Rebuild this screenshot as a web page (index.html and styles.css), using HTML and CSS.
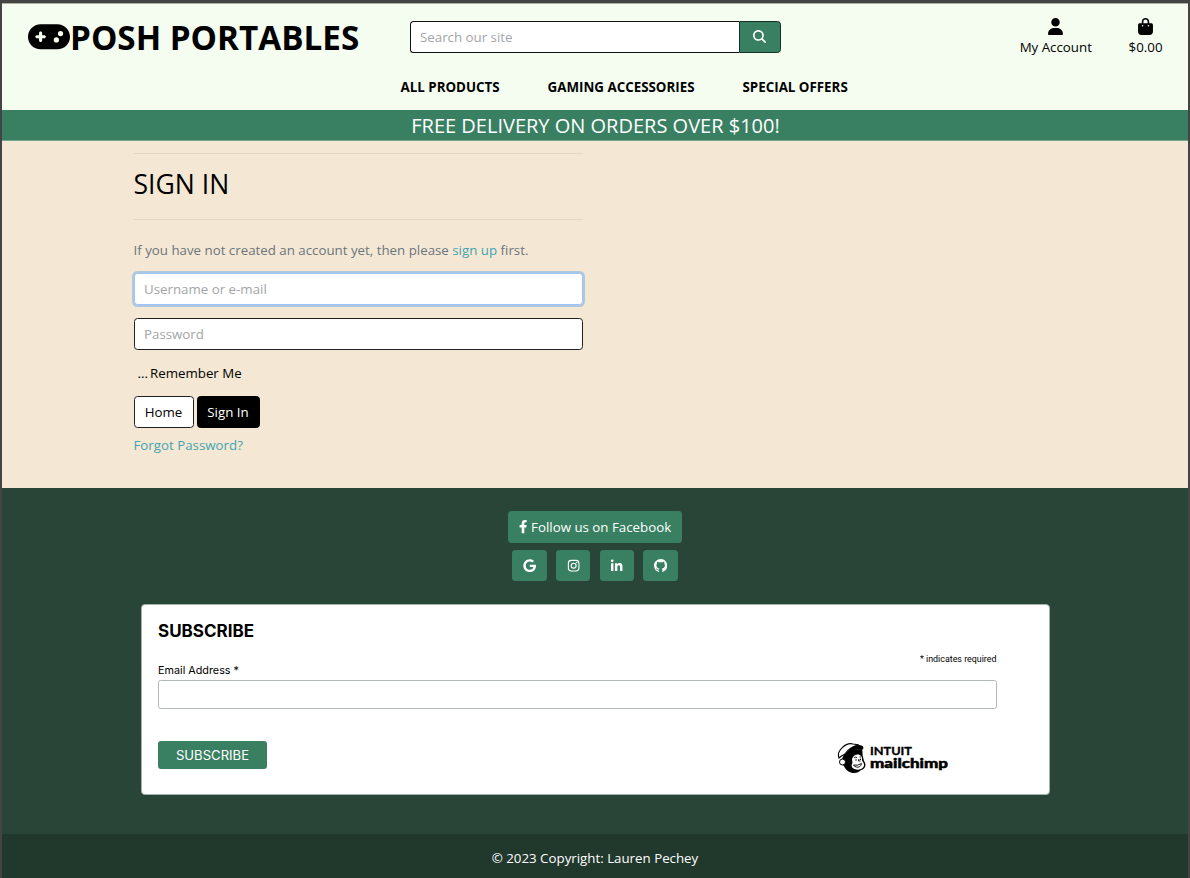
FILE: index.html
```html
<!DOCTYPE html>
<html lang="en">
<head>
<meta charset="utf-8">
<title>Posh Portables - Sign In</title>
<link rel="stylesheet" href="styles.css">
</head>
<body>
<div class="page">
  <header class="header">
    <div class="topbar">
      <a class="brand" href="#">
        <svg class="brand-icon" viewBox="0 64 640 384"><path d="M192 64C86 64 0 150 0 256S86 448 192 448H448c106 0 192-86 192-192s-86-192-192-192H192zM496 168a40 40 0 1 1 0 80 40 40 0 1 1 0-80zM392 304a40 40 0 1 1 80 0 40 40 0 1 1 -80 0zM168 200c0-13.300 10.700-24 24-24s24 10.700 24 24v32h32c13.300 0 24 10.700 24 24s-10.700 24-24 24H216v32c0 13.300-10.700 24-24 24s-24-10.700-24-24V280H136c-13.300 0-24-10.700-24-24s10.700-24 24-24h32V200z"/></svg>
        <span class="brand-name">POSH PORTABLES</span>
      </a>
      <form class="search">
        <input class="search-input" type="text" placeholder="Search our site">
        <button class="search-button" type="button" aria-label="Search">
          <svg class="search-icon" viewBox="0 0 512 512"><path d="M416 208c0 45.900-14.900 88.300-40 122.700L502.600 457.400c12.500 12.500 12.500 32.800 0 45.300s-32.800 12.500-45.300 0L330.700 376c-34.400 25.200-76.800 40-122.700 40C93.100 416 0 322.900 0 208S93.100 0 208 0S416 93.100 416 208zM208 352a144 144 0 1 0 0-288 144 144 0 1 0 0 288z"/></svg>
        </button>
      </form>
      <div class="account-links">
        <a class="account-link" href="#">
          <svg class="account-icon" viewBox="0 0 448 512"><path d="M224 256A128 128 0 1 0 224 0a128 128 0 1 0 0 256zm-45.700 48C79.800 304 0 383.800 0 482.300C0 498.700 13.300 512 29.700 512H418.300c16.400 0 29.700-13.300 29.700-29.700C448 383.800 368.200 304 269.700 304H178.300z"/></svg>
          <span>My Account</span>
        </a>
        <a class="account-link" href="#">
          <svg class="account-icon" viewBox="0 0 448 512"><path d="M160 112c0-35.300 28.700-64 64-64s64 28.700 64 64v48H160V112zm-48 48H48c-26.500 0-48 21.500-48 48V416c0 53 43 96 96 96H352c53 0 96-43 96-96V208c0-26.500-21.500-48-48-48H336V112C336 50.100 285.900 0 224 0S112 50.100 112 112v48zm24 48a24 24 0 1 1 0 48 24 24 0 1 1 0-48zm152 24a24 24 0 1 1 48 0 24 24 0 1 1 -48 0z"/></svg>
          <span>$0.00</span>
        </a>
      </div>
    </div>
    <nav class="nav">
      <a href="#">ALL PRODUCTS</a>
      <a href="#">GAMING ACCESSORIES</a>
      <a href="#">SPECIAL OFFERS</a>
    </nav>
  </header>
  <div class="banner">FREE DELIVERY ON ORDERS OVER $100!</div>

  <main class="main">
    <section class="signin">
      <h1 class="signin-title">SIGN IN</h1>
      <p class="signin-note">If you have not created an account yet, then please <a class="link" href="#">sign up</a> first.</p>
      <input class="field field-active" type="text" placeholder="Username or e-mail">
      <input class="field" type="password" placeholder="Password">
      <div class="remember"><span>...</span><span>Remember Me</span></div>
      <div class="actions">
        <a class="button button-light" href="#">Home</a>
        <a class="button button-dark" href="#">Sign In</a>
      </div>
      <a class="link" href="#">Forgot Password?</a>
    </section>
  </main>

  <footer class="footer">
    <a class="facebook" href="#">
      <svg class="facebook-icon" viewBox="0 0 320 512"><path d="M279.140 288l14.220-92.660h-88.910v-60.130c0-25.350 12.420-50.060 52.240-50.060h40.420V6.260S260.430 0 225.360 0c-73.220 0-121.080 44.380-121.080 124.720v70.620H22.890V288h81.390v224h100.170V288z"/></svg>
      <span>Follow us on Facebook</span>
    </a>
    <div class="social">
      <a class="social-link" href="#" aria-label="Google">
        <svg class="social-icon" viewBox="0 0 488 512"><path d="M488 261.800C488 403.300 391.100 504 248 504 110.800 504 0 393.200 0 256S110.800 8 248 8c66.800 0 123 24.500 166.300 64.900l-67.500 64.900C258.500 52.600 94.300 116.600 94.300 256c0 86.500 69.100 156.600 153.700 156.600 98.200 0 135-70.400 140.800-106.900H248v-85.300h236.100c2.300 12.700 3.900 24.900 3.900 41.400z"/></svg>
      </a>
      <a class="social-link social-narrow" href="#" aria-label="Instagram">
        <svg class="social-icon" viewBox="0 0 512 512"><g fill="none" stroke="#fff" stroke-width="42"><rect x="53" y="53" width="406" height="406" rx="112"/><circle cx="256" cy="256" r="94"/></g><circle cx="375" cy="137" r="27"/></svg>
      </a>
      <a class="social-link social-narrow" href="#" aria-label="LinkedIn">
        <svg class="social-icon" viewBox="0 -16 448 512"><path d="M100.280 448H7.400V148.900h92.880zM53.790 108.100C24.090 108.100 0 83.500 0 53.800a53.790 53.790 0 0 1 107.580 0c0 29.700-24.100 54.300-53.790 54.300zM447.900 448h-92.680V302.400c0-34.700-.7-79.200-48.290-79.200-48.290 0-55.690 37.700-55.690 76.700V448h-92.780V148.900h89.080v40.800h1.300c12.400-23.500 42.690-48.300 87.880-48.300 94 0 111.280 61.900 111.280 142.300V448z"/></svg>
      </a>
      <a class="social-link" href="#" aria-label="GitHub">
        <svg class="social-icon" viewBox="0 0 16 16"><path d="M8 0C3.580 0 0 3.580 0 8c0 3.540 2.290 6.530 5.470 7.590.4.070.55-.17.55-.38 0-.19-.01-.82-.01-1.490-2.010.37-2.530-.49-2.690-.94-.09-.23-.48-.94-.82-1.130-.28-.15-.68-.52-.01-.53.63-.01 1.080.58 1.230.82.72 1.210 1.870.87 2.330.66.07-.52.28-.87.51-1.070-1.780-.2-3.640-.89-3.640-3.950 0-.87.31-1.590.82-2.150-.08-.2-.36-1.020.08-2.120 0 0 .67-.21 2.200.82.64-.18 1.320-.27 2-.27.68 0 1.360.09 2 .27 1.530-1.040 2.200-.82 2.200-.82.44 1.100.16 1.920.08 2.120.51.56.82 1.270.82 2.150 0 3.070-1.870 3.750-3.650 3.950.29.25.54.73.54 1.480 0 1.070-.01 1.930-.01 2.200 0 .21.15.46.55.38A8.010 8.010 0 0 0 16 8c0-4.420-3.580-8-8-8z"/></svg>
      </a>
    </div>

    <form class="subscribe">
      <h2 class="subscribe-title">SUBSCRIBE</h2>
      <div class="required-note">* indicates required</div>
      <label class="email-label" for="email">Email Address *</label>
      <input class="email-input" id="email" type="email">
      <div class="subscribe-row">
        <button class="subscribe-button" type="button">SUBSCRIBE</button>
        <svg class="mailchimp" viewBox="0 0 112 34">
          <path d="M5 17C7 11 12 7 17 8l8-1c1 3 0 5 1 8l1 4c3 4 1 8-3 9-4 5-14 4-17-4-3-2-4-4-2-7z" fill="#000"/>
          <path d="M2 16C-1 9 9 0 16 2c3 0 4 1 6 1-6 1-11 4-14 9-2 1-4 2-6 4z" fill="#fff" stroke="#000" stroke-width="1.100"/>
          <path d="M10 11C12 6 17 3 22 3c4 0 6 3 3 5-6-1-11 0-15 3z" fill="#000"/>
          <circle cx="5.500" cy="20" r="3" fill="#fff" stroke="#000" stroke-width="1"/>
          <path d="M15 17c1-4 6-6 9-3 2 2 0 4 2 6 2 3 1 6-2 7-5 2-11-1-9-5 1-2 0-3 0-5z" fill="#fff"/>
          <path d="M17 16q1.500-1.500 3-.5M22.500 15h1.500M16.500 23q4 1 8-1.500-1 4.500-5 3.500-2 0-3-2M22 17l-.5 2h2" fill="none" stroke="#000" stroke-width=".9"/>
          <path d="M18.500 18h1M23 17.300h1" stroke="#000" stroke-width="1.300"/>
          <text class="intuit" x="33" y="12.500" textLength="42" lengthAdjust="spacingAndGlyphs">INTUIT</text>
          <text class="chimp" x="33" y="26" textLength="78" lengthAdjust="spacingAndGlyphs">mailchimp</text>
        </svg>
      </div>
    </form>
    <div class="copyright">© 2023 Copyright: Lauren Pechey</div>
  </footer>
</div>
</body>
</html>
```
FILE: styles.css
```css
* { box-sizing: border-box; }
body {
  margin: 0;
  font-family: "Open Sans", "Noto Sans", sans-serif;
  font-size: 13.3px;
  line-height: 20px;
  color: #000;
}
a { color: inherit; text-decoration: none; }
svg { display: block; }
input, button { font-family: inherit; font-size: inherit; margin: 0; }
input::placeholder { color: #a3a5a8; opacity: 1; }

.page {
  height: 878px;
  border: solid #444;
  border-width: 3px 2px 0;
  display: flex;
  flex-direction: column;
  overflow: hidden;
}

.header { height: 107px; flex: none; background: #f4fdf0; border-top: 1px solid #aab2a8; }
.topbar {
  height: 60px;
  padding: 0 25.500px 0 26px;
  display: grid;
  grid-template-columns: 382px 370.500px 1fr;
  align-items: start;
}
.brand { display: flex; align-items: center; padding-top: 10px; }
.brand-icon { width: 42px; height: 25.500px; }
.brand-name { font-size: 33.250px; line-height: 46px; font-weight: 700; white-space: nowrap; }
.search { display: flex; height: 31.500px; margin-top: 17px; }
.search-input {
  flex: 1;
  min-width: 0;
  border: 1px solid #111;
  border-right: 0;
  border-radius: 3.500px 0 0 3.500px;
  padding: 0 9px;
  background: #fff;
}
.search-button {
  width: 41.500px;
  border: 1px solid #163126;
  border-radius: 0 3.500px 3.500px 0;
  background: #397f62;
  display: flex;
  align-items: center;
  justify-content: center;
  padding: 0;
}
.search-icon { width: 13.300px; height: 13.300px; fill: #fff; }
.account-links { display: flex; justify-content: flex-end; gap: 36.700px; padding-top: 14px; }
.account-link { display: flex; flex-direction: column; align-items: center; gap: 2px; }
.account-icon { width: 15px; height: 17px; }
.nav { display: flex; padding: 13px 0 0 398.500px; gap: 48px; font-size: 13.350px; font-weight: 700; white-space: nowrap; }

.banner {
  height: 31px;
  flex: none;
  padding-left: 1px;
  background: #397f62;
  border-bottom: 1px solid #75a58e;
  color: #fff;
  font-size: 20px;
  line-height: 31px;
  text-align: center;
}

.main { height: 347px; flex: none; background: #f4e8d4; padding: 12px 0 0 131.500px; }
.signin { width: 449.500px; }
.signin-title {
  margin: 0 0 20px;
  height: 67px;
  border: solid #e3d8c5;
  border-width: 1px 0;
  font-size: 26.600px;
  font-weight: 400;
  line-height: 60px;
}
.signin-note { margin: 0 0 13px; color: #6c757d; }
.link { color: #45a3b3; }
.field {
  display: block;
  width: 100%;
  height: 32px;
  margin-bottom: 13px;
  padding: 0 9.500px;
  border: 1px solid #222;
  border-radius: 3.500px;
  background: #fff;
}
.field-active { border-color: #9cc5f5; box-shadow: 0 0 0 2px #b0c8df; }
.remember { display: flex; gap: 2px; padding-left: 4px; margin-bottom: 13px; }
.actions { display: flex; gap: 3px; margin-bottom: 7px; }
.button { height: 32px; line-height: 31px; border: 1px solid #222; border-radius: 3.500px; text-align: center; }
.button-light { width: 60px; background: #fff; }
.button-dark { width: 63px; background: #000; color: #fff; border-color: #000; }

.footer {
  flex: 1;
  background: #284537;
  color: #fff;
  display: flex;
  flex-direction: column;
  align-items: center;
  padding-top: 23px;
}
.facebook {
  width: 174px;
  height: 32px;
  background: #397f62;
  border-radius: 3.500px;
  display: flex;
  align-items: center;
  justify-content: center;
  gap: 4px;
}
.facebook-icon { width: 8.300px; height: 13.300px; fill: #fff; }
.social { display: flex; gap: 9.500px; margin-top: 6.500px; }
.social-link {
  width: 35px;
  height: 31.500px;
  background: #397f62;
  border-radius: 3.500px;
  display: flex;
  align-items: center;
  justify-content: center;
}
.social-narrow { width: 34px; }
.social-icon { width: 13.300px; height: 13.300px; fill: #fff; }

.subscribe {
  width: 909px;
  height: 191px;
  margin-top: 23px;
  padding: 16px 52px 0 16.500px;
  background: #fff;
  border: 1px solid #a3b3aa;
  border-radius: 4px;
  color: #000;
  font-family: Inter, sans-serif;
  display: flex;
  flex-direction: column;
}
.subscribe-title { margin: 0; font-size: 17px; line-height: 20px; font-weight: 700; }
.required-note { font-size: 8.900px; line-height: 12px; text-align: right; margin-top: 12px; font-family: Roboto, sans-serif; }
.email-label { font-size: 10.800px; line-height: 12px; margin-bottom: 3px; }
.email-input { height: 28.500px; border: 1px solid #b3b9b6; border-radius: 2.500px; background: #fff; }
.subscribe-row { display: flex; justify-content: space-between; padding: 32px 48px 0 0; }
.subscribe-button {
  width: 109px;
  height: 27.500px;
  margin-top: .5px;
  border: 0;
  border-radius: 3px;
  background: #397f62;
  color: #fff;
  font-size: 13.100px;
  padding: 0;
}
.mailchimp { width: 112px; height: 34px; margin-top: 1px; }
.intuit { font: 700 10.500px Lato, sans-serif; stroke: #000; stroke-width: .3px; }
.chimp { font: 900 14px Lato, sans-serif; stroke: #000; stroke-width: .5px; }
.copyright { width: 100%; margin-top: auto; height: 44px; line-height: 48px; text-align: center; background: #21382d; }
```
